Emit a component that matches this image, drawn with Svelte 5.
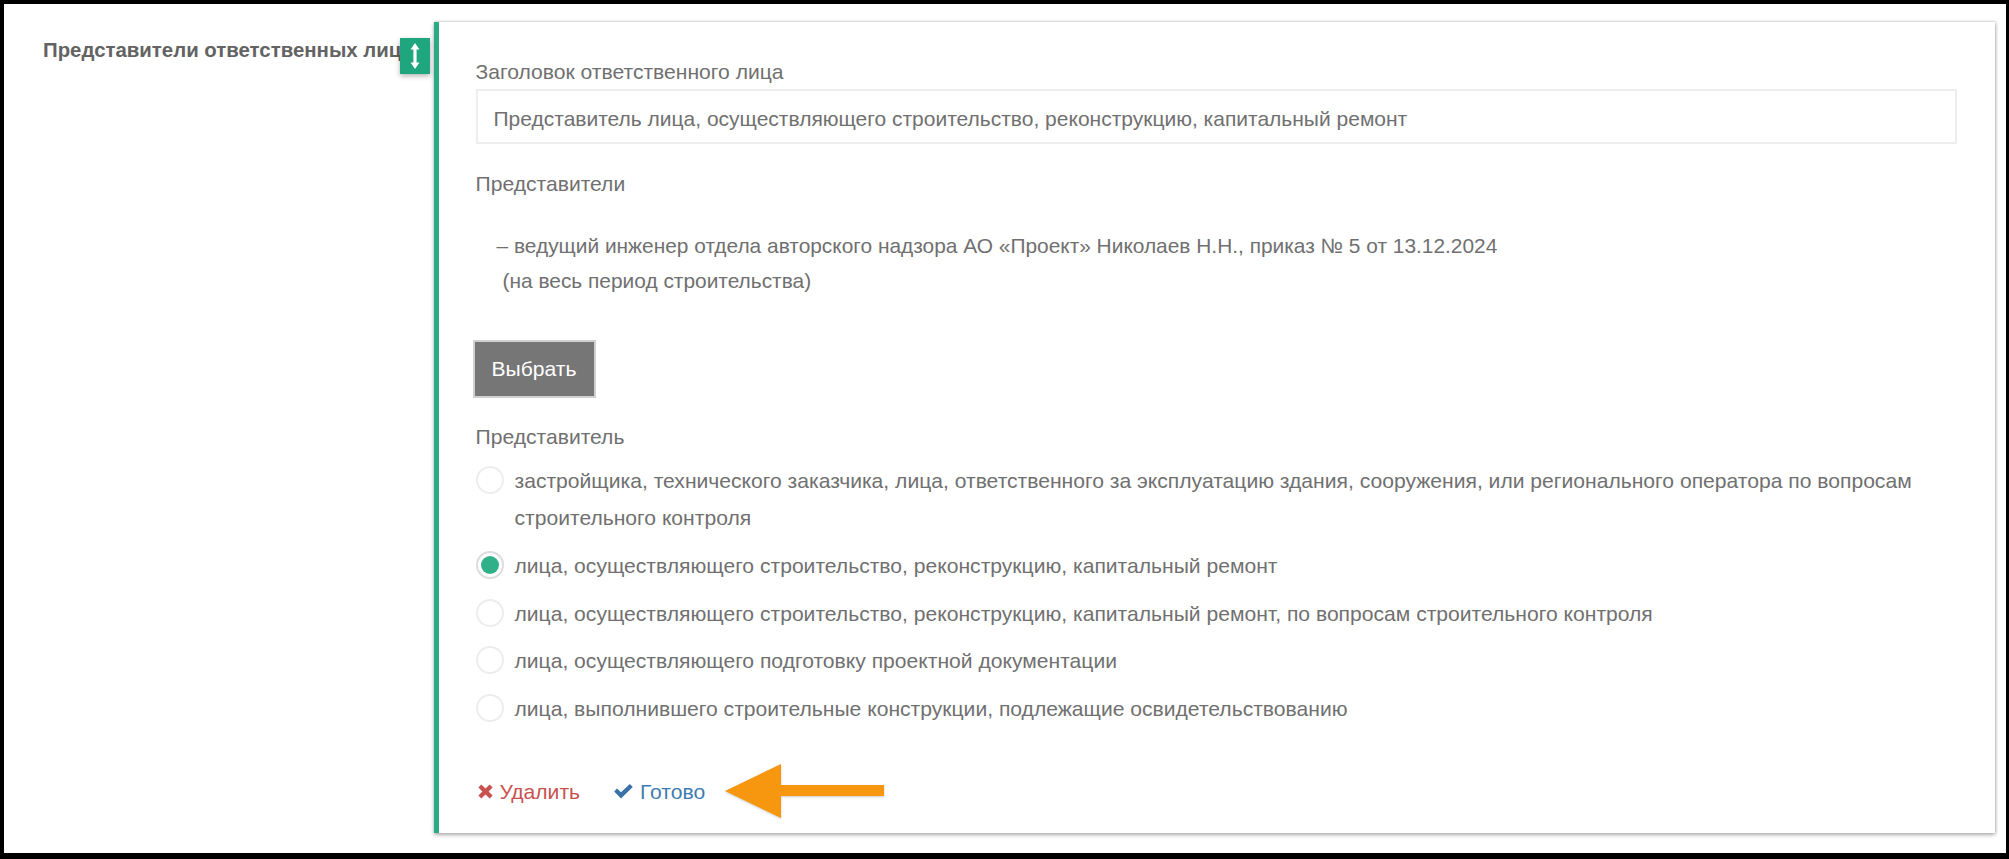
<script>
	const options = [
		{
			text: 'застройщика, технического заказчика, лица, ответственного за эксплуатацию здания, сооружения, или регионального оператора по вопросам строительного контроля',
			checked: false
		},
		{ text: 'лица, осуществляющего строительство, реконструкцию, капитальный ремонт', checked: true },
		{
			text: 'лица, осуществляющего строительство, реконструкцию, капитальный ремонт, по вопросам строительного контроля',
			checked: false
		},
		{ text: 'лица, осуществляющего подготовку проектной документации', checked: false },
		{ text: 'лица, выполнившего строительные конструкции, подлежащие освидетельствованию', checked: false }
	];
</script>

<div class="frame">
	<div class="side">
		<div class="side-title">Представители ответственных лиц</div>
		<button class="toggle" aria-label="Свернуть">
			<svg width="10" height="26" viewBox="0 0 10 26">
				<path d="M5 0 L9.4 6.5 H6.6 V19.5 H9.4 L5 26 L0.6 19.5 H3.4 V6.5 H0.6 Z" fill="#fff" />
			</svg>
		</button>
	</div>

	<div class="card">
		<div class="label">Заголовок ответственного лица</div>
		<div class="input">Представитель лица, осуществляющего строительство, реконструкцию, капитальный ремонт</div>

		<div class="label reps">Представители</div>
		<div class="rep-text">
			<p class="rep-first">– ведущий инженер отдела авторского надзора АО «Проект» Николаев Н.Н., приказ № 5 от 13.12.2024</p>
			<p class="rep-second">(на весь период строительства)</p>
		</div>

		<button class="pick">Выбрать</button>

		<div class="label role">Представитель</div>
		<div class="options">
			{#each options as opt}
				<div class="option">
					<span class="radio" class:checked={opt.checked}></span>
					<span class="option-text">{opt.text}</span>
				</div>
			{/each}
		</div>

		<div class="actions">
			<span class="action remove">
				<svg width="15" height="15" viewBox="0 0 15 15">
					<path d="M3.4 0.6 L7.5 4.4 L11.6 0.6 L14.6 3.6 L10.6 7.5 L14.6 11.4 L11.6 14.4 L7.5 10.6 L3.4 14.4 L0.4 11.4 L4.4 7.5 L0.4 3.6 Z" fill="#c9524f" />
				</svg>
				Удалить
			</span>
			<span class="action done">
				<svg width="19" height="15" viewBox="0 0 19 15">
					<path d="M0.2 7.4 L3 4.4 L7 8.2 L15.8 0 L18.8 3 L7 14.6 Z" fill="#3a72a8" />
				</svg>
				Готово
			</span>
			<svg class="arrow" width="160" height="56" viewBox="0 0 160 56">
				<path d="M0 27 L56 0 V21 H159 V32 H56 V54 Z" fill="#f7970f" />
			</svg>
		</div>
	</div>
</div>

<style>
	:global(body) {
		margin: 0;
		background: #fff;
	}

	.frame {
		box-sizing: border-box;
		height: 859px;
		border: solid #000;
		border-width: 4px 3px 6px 4px;
		padding: 18px 11px 20px 0;
		display: flex;
		font-family: 'Liberation Sans', Arial, sans-serif;
		font-size: 21.1px;
		color: #707070;
		overflow: hidden;
	}

	.side {
		position: relative;
		flex: 0 0 430px;
		box-sizing: border-box;
		padding: 13px 0 0 39px;
	}

	.side-title {
		font-weight: 700;
		font-size: 20.4px;
		line-height: 30px;
		color: #636363;
		white-space: nowrap;
	}

	.toggle {
		position: absolute;
		top: 16px;
		right: 4px;
		width: 30px;
		height: 36px;
		padding: 0;
		border: 0;
		background: #1fa67f;
		box-shadow: 0 2px 5px rgba(0, 0, 0, 0.3);
		display: flex;
		align-items: center;
		justify-content: center;
	}

	.card {
		flex: 1;
		box-sizing: border-box;
		border-left: 5px solid #2bab84;
		padding: 36px 38px 0 36.5px;
		background: #fff;
		box-shadow: 0 2px 4px rgba(0, 0, 0, 0.3), 1px 0 3px rgba(0, 0, 0, 0.12), 0 -1px 2px rgba(0, 0, 0, 0.08);
	}

	.label {
		line-height: 28px;
	}

	.input {
		box-sizing: border-box;
		height: 55px;
		margin-top: 3px;
		padding: 2px 0 0 16px;
		border: 2px solid #eeeeee;
		line-height: 51px;
		font-size: 21px;
	}

	.reps {
		margin-top: 26px;
	}

	.rep-text {
		margin-top: 30px;
		line-height: 35px;
		font-size: 20.9px;
	}

	.rep-text p {
		margin: 0;
	}

	.rep-first {
		padding-left: 21px;
	}

	.rep-second {
		padding-left: 27px;
	}

	.pick {
		display: block;
		box-sizing: border-box;
		width: 123px;
		height: 58px;
		margin: 42px 0 0 -3px;
		padding: 0;
		border: 2px solid #d0d0d0;
		background: #767676;
		color: #fff;
		font: inherit;
	}

	.role {
		margin-top: 25px;
	}

	.options {
		margin-top: 11px;
		display: flex;
		flex-direction: column;
		gap: 10.8px;
	}

	.option {
		display: flex;
		gap: 11px;
		line-height: 37px;
	}

	.radio {
		box-sizing: border-box;
		flex: 0 0 28px;
		width: 28px;
		height: 28px;
		margin-top: 4px;
		border: 2px solid #ededed;
		border-radius: 50%;
		background: #fff;
		display: flex;
		align-items: center;
		justify-content: center;
	}

	.radio.checked {
		border-color: #dcdcdc;
	}

	.radio.checked::after {
		content: '';
		width: 18px;
		height: 18px;
		border-radius: 50%;
		background: #2fb088;
	}

	.actions {
		position: relative;
		margin-top: 49.5px;
		display: flex;
		align-items: center;
		gap: 34px;
		line-height: 30px;
		padding-left: 2px;
	}

	.action {
		display: flex;
		align-items: center;
		gap: 7px;
	}

	.remove {
		color: #c9524f;
	}

	.done {
		color: #3f7cb0;
	}

	.arrow {
		position: absolute;
		left: 249px;
		top: -13px;
		filter: drop-shadow(0 1px 1px rgba(0, 0, 0, 0.2));
	}
</style>
